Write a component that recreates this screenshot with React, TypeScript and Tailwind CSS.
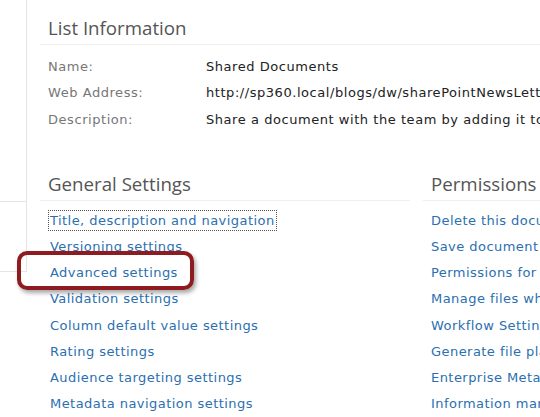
import React from "react";

const body = "font-['DejaVu_Sans',Verdana,sans-serif]";
const heading = "font-['Open_Sans','Noto_Sans',sans-serif]";

const info = [
  { label: "Name:", value: "Shared Documents" },
  { label: "Web Address:", value: "http://sp360.local/blogs/dw/sharePointNewsLetter/Shared Documents/Forms/AllItems.aspx" },
  { label: "Description:", value: "Share a document with the team by adding it to this document library." },
];

const general = [
  "Title, description and navigation",
  "Versioning settings",
  "Advanced settings",
  "Validation settings",
  "Column default value settings",
  "Rating settings",
  "Audience targeting settings",
  "Metadata navigation settings",
];

const permissions = [
  "Delete this document library",
  "Save document library as template",
  "Permissions for this document library",
  "Manage files which have no checked in version",
  "Workflow Settings",
  "Generate file plan report",
  "Enterprise Metadata and Keywords Settings",
  "Information management policy settings",
];

function LinkList({ items, focusFirst }: { items: string[]; focusFirst?: boolean }) {
  return (
    <ul className="flex flex-col">
      {items.map((item, i) => (
        <li key={item} className="h-[26.2px] flex items-center">
          <a
            href="#"
            className={`whitespace-nowrap text-[13px] tracking-[0.45px] text-[#2b6fb0] ${
              i === 0 && focusFirst ? "outline outline-1 outline-dotted outline-[#555] -ml-[1px] px-[1px]" : ""
            }`}
          >
            {item}
          </a>
        </li>
      ))}
    </ul>
  );
}

export default function App() {
  return (
    <div className={`relative w-[540px] h-[417px] overflow-hidden bg-white flex ${body}`}>
      {/* Left nav stub */}
      <div className="w-[27px] h-[272px] shrink-0 border-r border-b border-[#e4e4e4]">
        <div className="h-[202px] border-b border-[#e4e4e4]" />
      </div>

      {/* Main */}
      <div className="flex-1 pl-[13px] pt-[14px] min-w-0">
        <h2 className={`${heading} pl-[8px] text-[18.7px] leading-[28px] text-[#555] border-b border-[#efefef] pb-[2px]`}>
          List Information
        </h2>
        <div className="pl-[8px] pt-[8px]">
          {info.map((row) => (
            <div key={row.label} className="h-[26.5px] flex items-center text-[13px] tracking-[0.55px] whitespace-nowrap">
              <span className="w-[158px] shrink-0 text-[#777]">{row.label}</span>
              <span className="text-[#222]">{row.value}</span>
            </div>
          ))}
        </div>

        <div className="flex mt-[37px]">
          <div className="w-[370px] shrink-0">
            <h2 className={`${heading} pl-[8px] text-[18.7px] leading-[28px] text-[#555] border-b border-[#efefef] pb-[2px]`}>
              General Settings
            </h2>
            <div className="pl-[10px] pt-[7px]">
              <LinkList items={general} focusFirst />
            </div>
          </div>
          <div className="ml-[13px] min-w-0 flex-1">
            <h2 className={`${heading} pl-[8px] text-[18.7px] leading-[28px] text-[#555] border-b border-[#efefef] pb-[2px] whitespace-nowrap`}>
              Permissions and Management
            </h2>
            <div className="pl-[8px] pt-[7px]">
              <LinkList items={permissions} />
            </div>
          </div>
        </div>
      </div>

      {/* Callout highlight */}
      <div className="absolute left-[17px] top-[251px] w-[177px] h-[39px] rounded-[10px] border-[4px] border-[#8e1b1f] shadow-[2px_3px_4px_rgba(0,0,0,0.35)]" />
    </div>
  );
}
